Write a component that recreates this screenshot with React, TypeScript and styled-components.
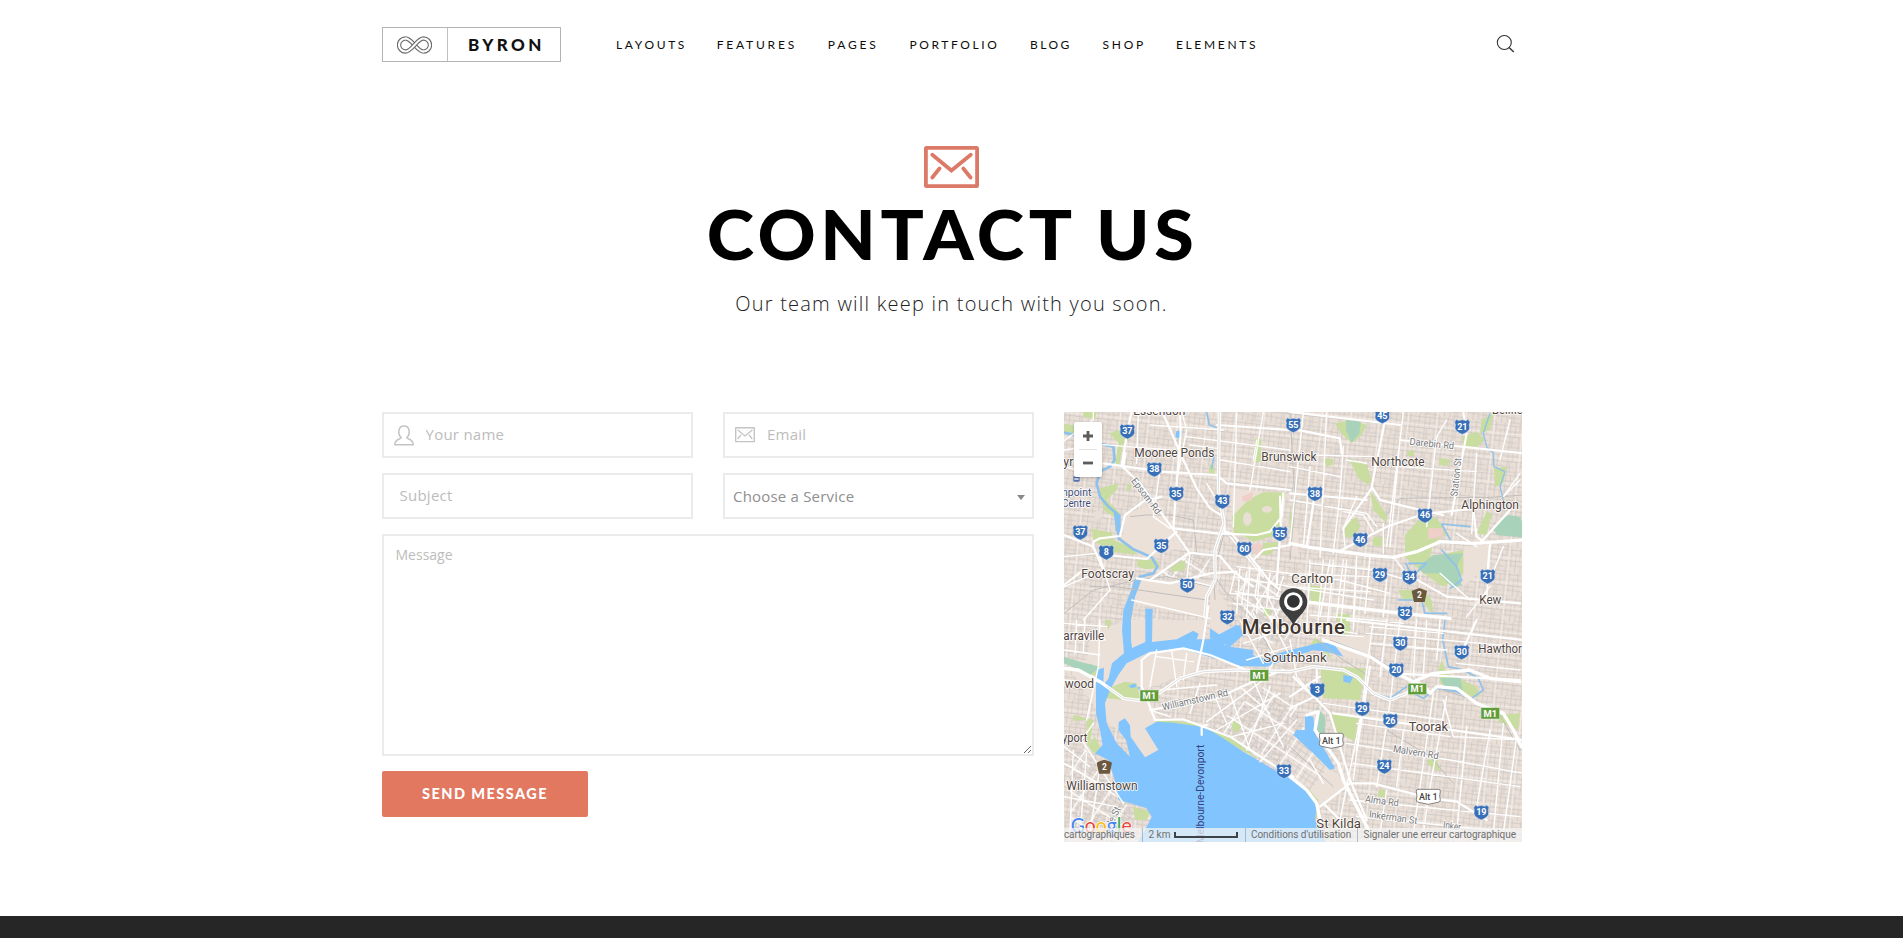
import React from 'react';
import styled, { createGlobalStyle } from 'styled-components';

const GlobalStyle = createGlobalStyle`
  * { box-sizing: border-box; }
  body { margin: 0; background: #fff; overflow: hidden; }
`;

const body = '"Open Sans", "Noto Sans", sans-serif';
const display = 'Lato, "Open Sans", sans-serif';

const Page = styled.div`
  height: 938px;
  display: flex;
  flex-direction: column;
  align-items: center;
  font-family: ${body};
`;

const Header = styled.header`
  width: 1140px;
  height: 89px;
  display: flex;
  align-items: center;
  margin-left: 1px;
`;

const Logo = styled.div`
  width: 179px;
  height: 35px;
  display: flex;
  border: 1px solid #b4b4b4;
`;

const LogoMark = styled.div`
  width: 65px;
  display: flex;
  align-items: center;
  justify-content: center;
  padding-right: 2px;
  border-right: 1px solid #c0c0c0;
`;

const LogoName = styled.div`
  padding-left: 20px;
  font: 900 17px/34px ${display};
  letter-spacing: 3.4px;
  color: #111;
`;

const Nav = styled.nav`
  display: flex;
  margin-left: 55px;
`;

const NavItem = styled.a<{ $width: number; $spacing: number }>`
  width: ${p => p.$width}px;
  font: 400 12px/16px ${display};
  letter-spacing: ${p => p.$spacing}px;
  color: #0c0c0c;
  white-space: nowrap;
`;

const SearchButton = styled.button`
  margin-left: auto;
  margin-right: 6px;
  margin-bottom: 1px;
  width: 20px;
  height: 20px;
  padding: 0;
  border: 0;
  background: none;
`;

const Hero = styled.section`
  display: flex;
  flex-direction: column;
  align-items: center;
  padding-top: 57px;
  height: 323px;
`;

const Title = styled.h1`
  margin: 9px 0 0 2px;
  font: 900 68px/74px ${display};
  letter-spacing: 4.3px;
  transform: scaleX(1.057);
  color: #000;
  white-space: nowrap;
`;

const Subtitle = styled.p`
  margin: 19px 0 0;
  font: 300 20px/28px ${body};
  letter-spacing: 1.22px;
  color: #222;
  white-space: nowrap;
`;

const Content = styled.main`
  width: 1140px;
  margin-left: 1px;
  display: flex;
  gap: 30px;
  height: 504px;
`;

const Form = styled.form`
  width: 652px;
  display: flex;
  flex-direction: column;
  align-items: flex-start;
  gap: 15px;
`;

const FieldRow = styled.div`
  width: 100%;
  display: grid;
  grid-template-columns: 311px 311px;
  gap: 30px;
`;

const Field = styled.label<{ $pad: number }>`
  height: 46px;
  display: flex;
  align-items: center;
  padding-left: ${p => p.$pad}px;
  border: 2px solid #ebebeb;
`;

const Input = styled.input<{ $gap?: number }>`
  flex: 1;
  min-width: 0;
  margin: 0 0 2px ${p => p.$gap ?? 0}px;
  padding: 0;
  border: 0;
  outline: 0;
  font: 400 15px/22px ${body};
  letter-spacing: 0.25px;
  color: #555;
  &::placeholder { color: #bcbcbc; opacity: 1; }
`;

const Select = styled.div`
  height: 46px;
  display: flex;
  align-items: center;
  justify-content: space-between;
  padding: 0 7px 0 8px;
  border: 2px solid #ebebeb;
  font: 400 15px/22px ${body};
  letter-spacing: 0.2px;
  color: #8f8f8f;
`;

const SelectLabel = styled.span`
  padding-bottom: 1px;
`;

const Caret = styled.span`
  margin-top: 2px;
  border: 4px solid transparent;
  border-top: 5px solid #888;
  border-bottom: 0;
`;

const Message = styled.textarea`
  display: block;
  width: 652px;
  height: 222px;
  padding: 9px 11.5px;
  border: 2px solid #ebebeb;
  outline: 0;
  font: 400 14px/20px ${body};
  letter-spacing: 0;
  &::placeholder { color: #bcbcbc; opacity: 1; }
`;

const Send = styled.button`
  width: 206px;
  height: 46px;
  padding: 0 0 1px;
  border: 0;
  border-radius: 2px;
  background: #e27860;
  color: #fff;
  font: 900 14.5px/20px ${display};
  letter-spacing: 1.45px;
`;

const MapFrame = styled.div`
  position: relative;
  width: 458px;
  height: 430px;
  overflow: hidden;
  font-family: Roboto, sans-serif;
`;

const MapSvg = styled.svg`
  display: block;
`;

const ZoomBox = styled.div`
  position: absolute;
  left: 10px;
  top: 10px;
  width: 28px;
  height: 55px;
  padding: 0 5px;
  background: #fff;
  border-radius: 2px;
  box-shadow: 0 1px 3px rgba(0, 0, 0, 0.25);
`;

const ZoomControl = styled.div`
  height: 27px;
  display: flex;
  align-items: center;
  justify-content: center;
  & + & { border-top: 1px solid #e3e3e3; }
`;

const Attribution = styled.div`
  position: absolute;
  left: 0;
  bottom: 0;
  width: 458px;
  height: 14px;
  display: flex;
  align-items: center;
  background: rgba(245, 245, 245, 0.72);
  font: 400 10px/14px Roboto, sans-serif;
  color: #707070;
  white-space: nowrap;
  overflow: hidden;
`;

const Credit = styled.span<{ $width: number; $pad?: number; $line?: boolean; $spacing?: number }>`
  flex: none;
  width: ${p => p.$width}px;
  padding-left: ${p => p.$pad ?? 0}px;
  border-left: ${p => (p.$line ? '1px solid rgba(120,150,180,0.55)' : '0')};
  letter-spacing: ${p => p.$spacing ?? 0}px;
  display: flex;
  align-items: center;
`;

const ScaleBar = styled.span`
  width: 64px;
  height: 6px;
  margin-left: 4px;
  border: 2px solid #3d4347;
  border-top: 0;
`;

const Footer = styled.footer`
  align-self: stretch;
  flex: 1;
  background: #262626;
`;

const Envelope = ({ width, height, color, stroke }: { width: number; height: number; color: string; stroke: number }) => (
  <svg width={width} height={height} viewBox="0 0 55 42" fill="none" stroke={color} strokeWidth={stroke} strokeLinecap="round" style={{ flex: 'none' }}>
    <rect x={stroke / 2} y={stroke / 2} width={55 - stroke} height={42 - stroke} rx="0.6" strokeLinejoin="round" />
    <path d="M8.3 8.7 27.4 24.5 46.8 8.7M15.5 22.5 8.3 31.5M39.3 22.5l7.3 9" />
  </svg>
);

const fallingStrand = 'M8.5 2.5 C12 2.5 14.2 5.4 17.5 9 C20.8 12.6 23 15.5 26.5 15.5';
const risingStrand = 'M8.5 2.5 A6.5 6.5 0 0 0 8.5 15.5 C12 15.5 14.2 12.6 17.5 9 C20.8 5.4 23 2.5 26.5 2.5 A6.5 6.5 0 0 1 26.5 15.5';

/* ---- city map; drawn at three units per pixel ---- */

type Pt = [number, number];
const sw = (d: string, i = 0) => <path key={i} d={d} transform="translate(0 660)" />;
const ne = (d: string, i = 0) => <path key={i} d={d} transform="translate(720 0)" />;
const se = (d: string, i = 0) => <path key={i} d={d} transform="translate(720 660)" />;
const mid = (d: string, i = 0) => <path key={i} d={d} transform="translate(480 480)" />;

const shields: [number, number, string][] = [
  [232, 94, '37'], [313, 208, '38'], [379, 281, '35'], [517, 304, '43'], [690, 401, '55'],
  [91, 397, '37'], [334, 437, '35'], [169, 457, '8'], [583, 446, '60'], [412, 556, '50'], [532, 651, '32'],
  [730, 75, '55'], [997, 48, '45'], [1237, 80, '21'], [795, 281, '38'], [1125, 346, '46'],
  [931, 419, '46'], [990, 524, '29'], [1079, 532, '34'], [1313, 529, '21'], [1065, 639, '32'],
  [1051, 730, '30'], [1235, 756, '30'], [1039, 810, '20'], [802, 870, '3'], [937, 926, '29'],
  [1021, 962, '26'], [1003, 1099, '24'], [1294, 1237, '19'], [702, 1113, '33'],
];

const places: [number, number, number, string, string?][] = [
  [250, 44, 156, 'Essendon'], [253, 172, 240, 'Moonee Ponds'], [634, 183, 166, 'Brunswick'],
  [40, 199, 30, 'yr'], [94, 535, 158, 'Footscray'], [964, 199, 160, 'Northcote'],
  [1234, 328, 173, 'Alphington'], [724, 549, 126, 'Carlton'], [1288, 612, 66, 'Kew'],
  [1326, 41, 120, 'Bellfield'], [40, 719, 123, 'arraville'], [44, 863, 88, 'wood'],
  [36, 1026, 76, 'yport'], [49, 1170, 214, 'Williamstown'], [640, 786, 190, 'Southbank'],
  [1285, 759, 150, 'Hawthorn'], [1076, 993, 118, 'Toorak'], [799, 1285, 134, 'St Kilda'],
  [36, 287, 88, 'npoint', '#3f4b77'], [36, 320, 86, 'Centre', '#3f4b77'],
];

const streets: [number, number, number, number, string][] = [
  [242, 243, 128, 53, 'Epsom Rd'], [1078, 134, 134, 6, 'Darebin Rd'], [1222, 290, 116, -84, 'Station St'],
  [339, 932, 202, -13, 'Williamstown Rd'], [1028, 1056, 138, 9, 'Malvern Rd'], [944, 1207, 102, 7, 'Alma Rd'],
  [956, 1252, 146, 8, 'Inkerman St'], [1178, 1284, 54, 8, 'Inker'], [188, 1276, 56, -64, 'le St'],
];

const routes: Pt[] = [[298, 887], [628, 826], [1102, 867], [1321, 940]];

const CityMap = () => (
  <MapSvg width="458" height="430" viewBox="42 36 1374 1290">
    <defs>
      <pattern id="blocks" width="86" height="74" patternUnits="userSpaceOnUse" patternTransform="rotate(6)">
        <path d="M0 7H86M0 24H40M52 21H86M0 40H86M0 57H30M40 54H86M0 71H50M8 0V74M22 7V40M36 0V24M36 40V74M50 0V57M64 21V74M76 0V40M80 54V74M15 40V71" stroke="#cbc5c1" strokeWidth="2.2" fill="none" />
        <path d="M0 32H86M43 0V74" stroke="#f3eeea" strokeWidth="2.5" />
      </pattern>
      <pattern id="diag" width="64" height="64" patternUnits="userSpaceOnUse" patternTransform="rotate(33)">
        <path d="M0 8H64M0 24H64M0 42H64M8 0V64M34 0V42M50 8V64" stroke="#c8c3c0" strokeWidth="2.2" fill="none" />
        <path d="M0 56H64M22 0V64" stroke="#fff" strokeWidth="4" />
      </pattern>
    </defs>
    <rect x="42" y="36" width="1374" height="1290" fill="#eadfd7" />
    <rect x="42" y="36" width="1374" height="1290" fill="url(#blocks)" />

    <g fill="#ece1d9">
      <path d="M222 345 330 302 360 385 400 440 290 475 208 440 220 400Z" />
      <path d="M262 540 480 545 470 655 250 610Z" />
      <path d="M545 265 700 280 680 400 545 400Z" />
      <path d="M42 780 H110 L125 700 230 660 H470 L440 810 280 870 330 960 300 1010 330 1050 280 1080 220 1000 160 960Z" />
      {ne('M0 380 25 395 25 470 0 465ZM520 440 600 435 590 500 520 560Z')}
      {se('M0 300 30 370 150 470 190 485 100 560 0 470Z')}
      {mid('M0 60 50 130 60 230 0 240ZM330 235 480 225 480 300 370 290Z')}
    </g>
    <g fill="url(#diag)">
      <path d="M540 940 640 860 720 900 830 1110 780 1170 690 1090 590 1040 480 975Z" />
      <path d="M320 530 410 460 480 470 470 540Z" />
      <path d="M60 1040 110 1050 190 1180 250 1230 240 1300 60 1300Z" />
      <path d="M560 540 700 520 760 700 640 740 560 640Z" />
    </g>

    <g fill="#c8dd9f">
      <path d="M42 72 72 76 72 100 42 96ZM178 100 225 84 246 108 218 135 208 196 196 190 205 128Z" />
      <path d="M100 36H140L135 58 100 50ZM150 265 205 250 200 270 170 300 210 340 205 360 160 330ZM125 386 185 398 190 420 240 440 265 465 180 455 130 420Z" />
      <path d="M595 300 640 276 708 278 690 330 698 400 610 425 580 408 552 400 545 350Z" />
      <path d="M262 478 320 480 330 500 290 508 262 500ZM360 500 405 480 405 510 365 515ZM615 115 635 118 632 185 612 188ZM640 430 690 425 660 465 635 465ZM480 190 495 205 490 228 476 220ZM232 250 250 262 230 275Z" />
      {ne('M135 70 185 60 230 75 215 105 185 130 150 95ZM178 175 230 195 245 240 235 255 205 235ZM240 270 290 345 290 370 250 330ZM165 375 200 350 210 380 195 410 165 412ZM515 110 560 95 585 120 560 140 520 140ZM575 60 610 40 600 90 570 100ZM612 205 650 200 640 250 615 262ZM448 175 478 178 475 197 448 195ZM102 173 130 178 128 196 108 198ZM350 155 372 150 372 168 354 168Z')}
      {ne('M345 405 400 345 440 355 470 400 430 430 420 470 520 450 520 520 460 560 400 520 345 470ZM250 410 280 412 275 440 248 436ZM0 310 10 380 0 425ZM60 555 98 560 92 610 62 605ZM590 335 605 340 590 405 560 400ZM325 570 400 570 425 600 430 645 395 600 340 600ZM140 640 180 645 180 660 142 660Z')}
      {mid('M163 142 182 146 178 170 162 168ZM382 165 420 162 410 212 385 208ZM313 235 345 250 365 300 330 265 300 258Z')}
      {se('M92 140 225 145 210 240 100 235ZM125 280 205 290 195 365 130 330ZM455 120 470 160 560 200 570 230 530 230 450 190 445 150ZM625 285 690 280 685 330 625 305ZM410 420 440 415 450 455 415 435ZM50 500 85 540 80 600 45 520ZM265 510 285 510 285 532 265 530ZM140 0 180 0 180 40 160 45Z')}
      {sw('M225 185 260 190 270 235 225 240 170 235 175 205ZM120 130 150 150 150 170 110 160ZM70 285 130 300 120 370 135 350 155 390 130 400 110 370 110 300 70 302ZM165 0 185 0 175 30ZM250 560 300 575 290 600 255 600ZM550 300 575 320 560 340 545 325ZM300 320 330 295 400 305 470 320 540 350 630 420 530 365 390 320 320 315Z')}
    </g>
    <g fill="#a9d2bb">
      {ne('M168 60 212 65 208 100 185 128 168 90ZM640 355 655 345 690 350 700 375 700 412 620 405 608 385ZM430 465 520 460 500 500 515 555 490 565 445 520 400 520 385 500Z')}
      {se('M80 260 105 290 105 350 80 340ZM450 175 510 170 520 215 470 210Z')}
      {sw('M42 110 90 125 150 140 120 165 42 130Z')}
    </g>
    <g fill="#efcfc8">
      {ne('M415 385 460 385 458 410 415 418Z')}
      <path d="M575 290 610 275 605 300 580 305ZM605 430 640 435 620 470Z" />
    </g>

    <g fill="#e9dfd6">
      <ellipse cx="592" cy="357" rx="13" ry="20" /><ellipse cx="651" cy="328" rx="15" ry="10" /><circle cx="145" cy="345" r="13" />
    </g>

    <g fill="#82c4fe">
      {sw('M140 150 162 143 160 195 176 175 186 130 222 100 216 30 220 -30 240 -80 255 -125 275 -122 255 -70 243 0 243 60 246 84 286 66 286 -34 308 -34 306 66 380 58 430 32 446 42 440 58 480 58 560 15 572 22 545 60 520 75 560 90 640 115 700 95 760 80 810 68 850 70 880 110 830 95 790 90 720 115 650 140 570 138 470 108 400 88 300 95 230 130 205 165 180 210 165 250 170 310 200 370 240 410 228 360 205 330 206 306 225 295 240 316 242 350 285 412 325 390 285 325 320 305 370 308 440 318 470 325 520 355 580 395 640 430 690 460 720 472 770 505 800 560 795 600 830 672 260 672 285 630 305 590 290 565 240 550 205 540 200 500 175 420 135 400 158 375 150 330 138 280 138 200Z')}
      {mid('M0 205 30 225 90 195 100 225 60 260 130 270 130 300 95 320 70 300 0 280 0 262 50 255 0 235Z')}
      {se('M45 285 70 290 75 340 110 400 135 445 120 450 70 400 10 345 20 330 45 330ZM160 165 190 170 180 190 160 185Z')}
      <path d="M190 330 212 345 212 395 198 395ZM378 94 398 92 392 116 376 112Z" />
      {sw('M235 198 255 190 260 200 245 205ZM262 202 270 200 268 212Z')}
    </g>
    <g fill="none" stroke="#8fc2ea" strokeLinecap="round" strokeLinejoin="round">
      <path d="M42 98 70 104M160 134 190 140 194 180 180 200 150 215 140 250 150 290 175 320 200 340 206 415 250 448 305 472 322 500 310 520 270 530 245 580 238 660" strokeWidth="8" />
      <path d="M470 36 478 75 498 82M470 170 492 168M492 170 485 205" strokeWidth="5" />
      <g strokeWidth="4">
        {ne('M600 40 580 100 590 140 610 160 612 200 645 215 630 260 640 300')}
      </g>
      <g strokeWidth="5">
        {ne('M540 380 455 372 480 418M348 490 365 530M355 490 410 490 375 520M455 450 500 500 515 540 480 565M325 600 395 600 405 640 470 640')}
        {se('M465 0 458 60 475 140 520 150 565 175 580 210 545 235 500 215 440 205 400 235 360 215M140 145 200 170 240 215 300 235 350 200')}
      </g>
    </g>

    <g fill="none" stroke="#c0bdbc" strokeWidth="3">
      <path d="M510 36 506 270 525 390 490 520 495 600M240 350 290 345 360 345 430 360 440 460M120 560 200 560 470 600M42 640 130 570 260 540 350 530 480 560" />
      {ne('M310 320 330 295 600 292 700 285M290 345 310 315M0 40 15 300 0 480')}
      {se('M120 60 250 110 360 180M430 200 520 230 620 270 690 390M290 330 420 410 490 490M0 380 130 500')}
      {mid('M0 30 50 100 130 180 180 270M320 240 400 300 480 350')}
    </g>

    <g fill="none" stroke="#fff" strokeWidth="4.2" strokeLinecap="round">
      <path d="M42 122 130 60 130 36M265 36 260 190M395 36 410 90 380 240M300 75 520 90M410 110 720 150M420 135 500 145M42 150 160 134 360 150M560 36 550 380M640 36 600 270M512 180 720 215M620 120 610 180M330 210 310 350 360 385M42 200 100 215M42 470 140 460M150 470 180 570 100 660M42 560 160 510M245 600 480 655M420 460 410 540 490 560M470 250 500 300M540 410 640 530M560 500 720 520M550 530 720 560M555 575 700 600M570 500 560 640M600 500 590 650M630 500 620 640M660 520 650 620" />
      {ne('M40 36 0 430M60 200 40 440M110 36 90 470M160 140 150 280 130 460M200 290 160 385 165 440M340 36 330 120 290 440M330 120 300 440M470 60 440 110 410 380M660 60 630 180M560 160 545 400M0 200 150 230M60 165 250 170M170 180 230 190M330 200 560 215M0 300 230 340 260 380M160 335 220 345 250 395M60 490 250 510 350 540M200 470 190 650M240 470 225 640M280 370 280 460M310 470 340 510M0 525 150 540 300 580M0 560 250 600M120 480 90 650M160 480 140 650M290 540 280 650M600 430 590 600M640 440 600 540M530 650 600 560M450 520 540 600M690 240 640 290 690 220M500 400 560 440')}
      {se('M0 60 20 170 80 240M250 0 230 150 190 480M290 0 270 170M330 0 300 250 260 500M380 0 370 170M410 0 400 160M450 0 440 120M0 35 220 50M230 40 690 80M240 70 470 90M500 130 690 150M100 250 460 300M460 240 490 350 700 360M200 310 480 350M170 370 480 420 700 460M190 430 690 500M430 220 370 640M470 230 420 500 400 640M530 320 500 640M600 330 560 560M640 310 610 640M680 350 640 640M180 540 690 590M200 590 600 630M100 490 60 420M20 260 0 290M240 0 340 10M240 20 460 40M290 510 270 640M340 330 320 500M220 250 150 600')}
      {mid('M75 40 60 100M110 35 95 130 160 210M145 40 135 110 190 190M180 40 170 100 220 210M60 100 190 110M70 130 210 150M100 250 270 190M110 300 240 260M90 180 160 310M130 160 200 300M180 170 240 290M220 50 200 110M300 0 290 220M340 0 320 230M370 0 350 220M410 0 390 220M440 0 430 210M230 80 480 95M230 40 480 50M300 165 480 180M290 200 440 220')}
      {sw('M42 10 170 20M42 50 165 60M42 90 150 105M150 0 145 140 110 300M80 0 75 100M105 0 100 100M42 180 130 190M130 310 95 360 220 550M42 380 120 440M42 430 180 510M42 530 200 560M70 390 60 640M110 400 90 640M150 440 120 640M365 90 380 200M410 100 400 180M320 90 300 200M320 110 430 125M300 270 360 290M330 210 500 195M420 280 450 190M470 305 640 180M500 330 690 220M545 350 700 310M590 390 660 200M630 425 740 300M490 220 530 310M540 220 600 390M570 200 660 280M610 180 700 380M680 110 640 180')}
    </g>

    <g fill="none" stroke="#fff" strokeLinecap="round" strokeLinejoin="round">
      <g strokeWidth="6.5">
        <path d="M245 36 232 94 215 198 270 250 365 382 418 458 300 540M340 42 400 180 440 265 480 325 520 350 525 395 545 400 660 545 690 570M390 36 392 100 370 385 500 400 620 405 660 395 695 350 700 280M500 75 720 90M160 190 340 215 500 225 530 250 720 270M690 401 680 560M690 290 693 410M220 198 226 160M720 435 640 450 610 480M42 405 130 440 160 510M130 445 130 425 150 415 210 408 225 345 280 305 335 290M170 465 290 477 334 437 380 395M418 458 510 468 545 510 610 560M260 535 360 550 480 520 560 515M42 555 100 510" />
        {ne('M0 36 330 75M0 85 150 115 155 160M290 36 245 260 270 300 350 320 460 345M245 265 160 385M155 450 290 380 400 342 560 325M0 280 230 300M520 36 530 100 485 345M330 120 700 160M75 280 50 440M550 330 560 410 580 425M660 330 570 430M365 530 470 590 690 610M600 430 592 520')}
        {se('M240 140 200 390M310 160 690 180M170 0 700 60M515 96 560 0M85 225 0 265M80 150 82 240 120 280 180 480 230 600M180 490 90 560M180 490 250 490 420 535 500 545 590 600M100 550 170 620M130 280 700 360M10 170 70 230M0 230 90 170')}
        {sw('M315 300 400 298 540 350 690 448 730 470M315 300 290 235 275 200 275 120 300 100 400 85 480 105 590 150M300 270 500 235 620 180 700 150')}
        {sw('M455 345 455 322 470 315M440 160 460 60 475 -40')}
      </g>
      <g strokeWidth="10">
        <path d="M508 36 505 270 522 370 495 450 495 540 470 590 465 650" />
        {ne('M0 430 60 442 230 465 310 472 380 455 450 425 550 430 700 420')}
        {ne('M0 600 290 635 480 655')}
        {sw('M42 145 85 150 150 185 220 235 270 242 330 218 390 175 460 155 560 150 720 155')}
        {se('M0 155 70 140 160 150 200 170 250 220 300 240 350 220 382 190 400 195 420 220 440 200 500 205 560 250 640 280 670 330 695 380M100 60 240 110 310 155 370 185 430 160 490 155 540 150 600 175 690 185')}
        {se('M50 285 85 275 75 330 110 380 145 430 160 480 240 640M0 470 50 510 80 550 90 600')}
      </g>
    </g>
    <g fill="none" stroke="#cbc9ca" strokeWidth="1.8">
      <path d="M508 36 505 270 522 370 495 450 495 540 470 590 465 650" />
      {sw('M170 200 220 235 270 242 330 218 390 175 460 155 560 150 720 155')}
      {se('M0 155 70 140 160 150 200 170 250 220 300 240 350 220')}
    </g>

    <g stroke="#fff" strokeWidth="5" paintOrder="stroke" fontSize="30">
      {streets.map(([x, y, w, r, t]) => (
        <text key={t} transform={`translate(${x} ${y}) rotate(${r})`} textLength={w} lengthAdjust="spacingAndGlyphs" fill="#777">{t}</text>
      ))}
    </g>
    <text transform="translate(463 1330) rotate(-90)" fontSize="32" fill="#34407c" textLength="296" lengthAdjust="spacingAndGlyphs">Melbourne-Devonport</text>

    <g stroke="#fff" strokeWidth="5" strokeLinejoin="round" paintOrder="stroke">
      {places.map(([x, y, w, t, c]) => (
        <text key={t} x={x} y={y} fill={c ?? '#50433b'} fontSize={c ? 35 : 38.5} textLength={w} lengthAdjust="spacingAndGlyphs">{t}</text>
      ))}
      <text x="575" y="702" fontSize="61" fontWeight="500" fill="#40342d" textLength="310" lengthAdjust="spacing">Melbourne</text>
    </g>
    <rect x="70" y="228" width="19" height="17" rx="3" fill="#5873b1" />
    <path d="M73 237h13" stroke="#fff" strokeWidth="4" />

    {shields.map(([x, y, t], i) => (
      <g key={i} transform={`translate(${x} ${y})`}>
        <path d="M-17-22-11-18Q0-23 11-18L17-22 23-14Q19-7 22 3 22 14 0 23-22 14-22 3-19-7-23-14Z" fill="#386fb7" stroke="#dfe9f3" strokeWidth="1.5" />
        <text y="9" fontSize="27" fontWeight="700" fill="#fff" textAnchor="middle">{t}</text>
      </g>
    ))}
    {[[1108, 586], [163, 1101]].map(([x, y]) => (
      <g key={x} transform={`translate(${x} ${y})`}>
        <path d="M-14-17 0-22 14-17 23-13 16 20H-16L-23-13Z" fill="#6b583f" />
        <text y="9" fontSize="25" fontWeight="700" fill="#fff" textAnchor="middle">2</text>
      </g>
    ))}
    {routes.map(([x, y]) => (
      <g key={x} transform={`translate(${x} ${y})`}>
        <rect x="-28" y="-17" width="56" height="34" fill="#629d3c" stroke="#e4efd8" strokeWidth="1.5" />
        <text y="10" fontSize="28" fontWeight="700" fill="#fff" textAnchor="middle">M1</text>
      </g>
    ))}
    {[[844, 1021], [1135, 1189]].map(([x, y]) => (
      <g key={x} transform={`translate(${x} ${y})`}>
        <path d="M-31-21H31Q37-21 36-14 32 0 36 10 37 17 29 18L0 24-29 18Q-37 17-36 10-32 0-36-14-37-21-31-21Z" fill="#fff" stroke="#6b6b6b" strokeWidth="2.5" />
        <text y="10" fontSize="27" fontWeight="500" fill="#444" textAnchor="middle">Alt 1</text>
      </g>
    ))}

    <g fill="#3f3e3e">
      <path d="M730 676C718 648 688 634 688 607a42 42 0 0 1 84 0C772 634 742 648 730 676Z" />
      <circle cx="730" cy="605" r="28" fill="#fff" />
      <circle cx="730" cy="604" r="19" fill="#333" />
    </g>

    <text x="62" y="1299" fontSize="62" fontFamily="Lato" stroke="#fff" strokeWidth="4" paintOrder="stroke" textLength="183" lengthAdjust="spacingAndGlyphs">
      <tspan fill="#4285f4">G</tspan><tspan fill="#ea4335">o</tspan><tspan fill="#fbbc05">o</tspan><tspan fill="#4285f4">g</tspan><tspan fill="#34a853">l</tspan><tspan fill="#ea4335">e</tspan>
    </text>
  </MapSvg>
);

const navItems: [string, number, number][] = [
  ['LAYOUTS', 100.7, 2.65],
  ['FEATURES', 111, 2.8],
  ['PAGES', 81.7, 2.85],
  ['PORTFOLIO', 120.5, 2.6],
  ['BLOG', 72.5, 2.5],
  ['SHOP', 73.5, 2.8],
  ['ELEMENTS', 84, 2.7],
];

export default function App() {
  return (
    <Page>
      <GlobalStyle />
      <Header>
        <Logo>
          <LogoMark>
            <svg width="35" height="18" viewBox="0 0 35 18" fill="none">
              {[fallingStrand, risingStrand].map(d => (
                <g key={d}>
                  <path d={d} stroke="#6c6c6c" strokeWidth="4.4" />
                  <path d={d} stroke="#fff" strokeWidth="2.2" strokeLinecap="square" />
                </g>
              ))}
            </svg>
          </LogoMark>
          <LogoName>BYRON</LogoName>
        </Logo>
        <Nav>
          {navItems.map(([label, width, spacing]) => (
            <NavItem key={label} $width={width} $spacing={spacing}>{label}</NavItem>
          ))}
        </Nav>
        <SearchButton aria-label="Search">
          <svg width="20" height="20" viewBox="0 0 20 20" fill="none" stroke="#333" strokeWidth="1.1" style={{ display: 'block' }}>
            <circle cx="8.3" cy="8.500" r="7" />
            <path d="m13 13.600 4.800 4.500" strokeWidth="1.4" />
          </svg>
        </SearchButton>
      </Header>

      <Hero>
        <Envelope width={55} height={42} color="#db7a66" stroke={3.8} />
        <Title>CONTACT US</Title>
        <Subtitle>Our team will keep in touch with you soon.</Subtitle>
      </Hero>

      <Content>
        <Form>
          <FieldRow>
            <Field $pad={10}>
              <svg width="20" height="21" viewBox="0 0 20 21" fill="none" stroke="#c4c4c4" strokeWidth="1.5" style={{ flex: 'none' }}>
                <path d="M7.3 12.6C3.6 10 3.7 1 10 1s6.4 9 2.7 11.600c0 1.600 6.300 1 6.600 7.200H.7C1 13.600 7.300 14.200 7.300 12.600Z" strokeLinejoin="round" />
              </svg>
              <Input $gap={11.5} placeholder="Your name" />
            </Field>
            <Field $pad={10}>
              <Envelope width={20} height={15.3} color="#c4c4c4" stroke={3.8} />
              <Input $gap={12} placeholder="Email" />
            </Field>
          </FieldRow>
          <FieldRow>
            <Field $pad={15.5}>
              <Input placeholder="Subject" />
            </Field>
            <Select>
              <SelectLabel>Choose a Service</SelectLabel>
              <Caret />
            </Select>
          </FieldRow>
          <Message placeholder="Message" />
          <Send type="button">SEND MESSAGE</Send>
        </Form>

        <MapFrame>
          <CityMap />
          <ZoomBox>
            <ZoomControl>
              <svg width="10" height="10" stroke="#5c5c5c" strokeWidth="2.8"><path d="M5 0V10M0 5H10" /></svg>
            </ZoomControl>
            <ZoomControl>
              <svg width="10" height="10" stroke="#5c5c5c" strokeWidth="2.8"><path d="M0 5H10" /></svg>
            </ZoomControl>
          </ZoomBox>
          <Attribution>
            <Credit $width={78} $spacing={-0.12}>cartographiques</Credit>
            <Credit $width={103} $pad={5.5} $line>2 km<ScaleBar /></Credit>
            <Credit $width={112} $pad={5} $line $spacing={-0.05}>Conditions d'utilisation</Credit>
            <Credit $width={165} $pad={5.5} $line $spacing={-0.03}>Signaler une erreur cartographique</Credit>
          </Attribution>
        </MapFrame>
      </Content>
      <Footer />
    </Page>
  );
}
